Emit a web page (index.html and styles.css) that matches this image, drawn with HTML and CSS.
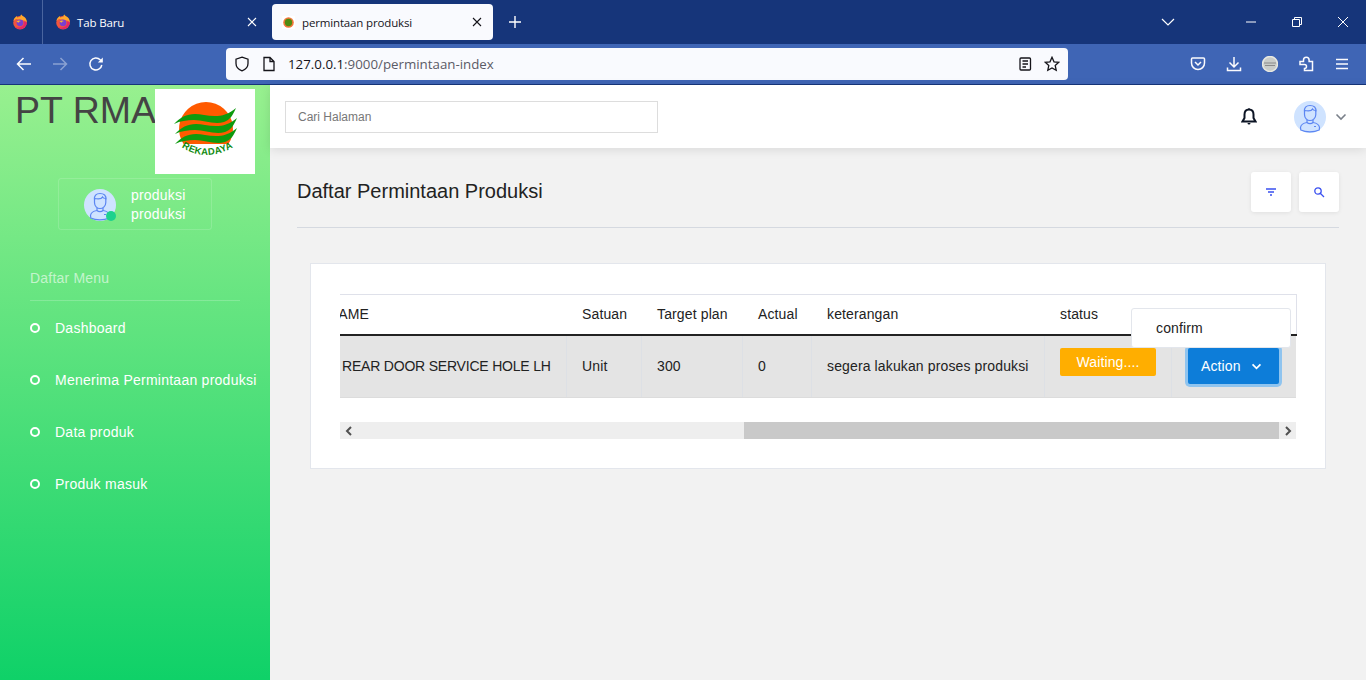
FILE: index.html
```html
<!DOCTYPE html>
<html lang="id">
<head>
    <meta charset="UTF-8">
    <title>permintaan produksi</title>
    <link rel="stylesheet" href="styles.css">
</head>
<body>
<svg class="defs" width="0" height="0">
    <symbol id="fox" viewBox="0 0 16 16">
        <circle cx="8" cy="8.800" r="6.800" fill="#f2553d"/>
        <path d="M1.400 7C2 4.200 3.600 2.600 5 2c-.2.800 0 1.400.4 1.800C6.200 3 7.400 2.600 8.800 2.700 8 1.800 8.400 1 9.600.4c.2 1 1.200 1.600 2.400 2.400 1.800 1.200 2.800 3.200 2.800 5.400 0 .8-.8-.6-1.800-1.400L4 5z" fill="#ffa72b"/>
        <path d="M14.800 8.200c0 3.800-3 6.800-6.800 6.800-2 0-3.600-.8-4.800-2 2.400 1 6 .8 7.800-1.200 1.200-1.400 1.400-3 1-4.600z" fill="#e3256b"/>
        <circle cx="8" cy="8.800" r="3.400" fill="#7a3fd0"/>
        <path d="M4.600 7.400c1.600-1.200 3.400-1 4.600 0-1.200-.2-2 .2-2.200 1-.6.200-1.600-.2-2.400-1z" fill="#ffb52e"/>
    </symbol>
    <symbol id="face" viewBox="0 0 32 32">
        <circle cx="16" cy="16" r="16" fill="#cfe3ff"/>
        <g fill="none" stroke="#5c86f2" stroke-width="1.200">
            <path d="M10.500 10.500c-.5-3.500 1.500-6 5.500-6s6.500 2 5.800 6"/>
            <path d="M10.500 9.500c2.500.5 7 .5 8-1.500.5 1 2 1.500 3.300 1.500v4c0 3.500-2.800 6-5.800 6s-5.500-2.500-5.500-6z"/>
            <path d="M13 19v2.500c-3 .5-6 1.500-6.500 5l.3 2.500c5 2.500 13 2.500 18.400 0l.3-2.500c-.5-3.500-3.500-4.500-6.500-5V19"/>
            <path d="M13 21.500c1.500 1.500 4.500 1.500 6 0M20 25.500h2"/>
        </g>
    </symbol>
</svg>

<div class="tabbar">
    <div class="view-btn"><svg class="ic16"><use href="#fox"/></svg></div>
    <div class="tab">
        <svg class="ic16"><use href="#fox"/></svg>
        <span class="tab-title">Tab Baru</span>
        <svg class="tab-x" viewBox="0 0 10 10"><path d="M1 1l8 8M9 1l-8 8"/></svg>
    </div>
    <div class="tab tab-active">
        <svg class="favicon" viewBox="0 0 16 16"><rect width="16" height="16" fill="#fff"/><circle cx="8" cy="8" r="6.500" fill="#f2763a"/><circle cx="8" cy="8" r="4.500" fill="#4f8a10"/></svg>
        <span class="tab-title">permintaan produksi</span>
        <svg class="tab-x" viewBox="0 0 10 10"><path d="M1 1l8 8M9 1l-8 8"/></svg>
    </div>
    <svg class="new-tab" viewBox="0 0 14 14"><path d="M7 1v12M1 7h12"/></svg>
    <div class="win-btns">
        <svg class="tab-list" viewBox="0 0 14 8"><path d="M1 1l6 6 6-6"/></svg>
        <svg class="win-ic" viewBox="0 0 12 12"><path d="M1 6h10"/></svg>
        <svg class="win-ic" viewBox="0 0 12 12"><path d="M1.500 3.500h7v7h-7zM3.500 3.500v-2h7v7h-2"/></svg>
        <svg class="win-ic" viewBox="0 0 12 12"><path d="M1 1l10 10M11 1L1 11"/></svg>
    </div>
</div>

<div class="navbar">
    <svg class="nav-ic" viewBox="0 0 16 16"><path d="M15 8H1.500M7.500 2l-6 6 6 6"/></svg>
    <svg class="nav-ic nav-off" viewBox="0 0 16 16"><path d="M1 8h13.500M8.500 2l6 6-6 6"/></svg>
    <svg class="nav-ic" viewBox="0 0 16 16"><path d="M13.800 9a6 6 0 1 1-1.600-5.200L14 5.500"/><path class="solid" d="M14.800 1.500v5h-5z"/></svg>
    <div class="urlbar">
        <svg class="url-ic" viewBox="0 0 16 16"><path d="M8 1.200l6 2v4.300c0 3.500-2.500 6-6 7.300-3.500-1.300-6-3.800-6-7.300V3.200z"/></svg>
        <svg class="url-ic" viewBox="0 0 16 16"><path d="M3 1.500h6l4 4v9H3zM9 1.500v4h4"/></svg>
        <span class="url-text"><b>127.0.0.1</b>:9000/permintaan-index</span>
        <svg class="url-ic" viewBox="0 0 16 16"><path d="M4 2h8.500c.6 0 1 .4 1 1v10c0 .6-.4 1-1 1H4c-.6 0-1-.4-1-1V3c0-.6.4-1 1-1zM5.500 5h5.500M5.500 8h5.500M5.500 11h3.500"/></svg>
        <svg class="url-ic url-star" viewBox="0 0 16 16"><path d="M8 1.300l2 4.500 4.800.5-3.600 3.200 1 4.800L8 12l-4.200 2.300 1-4.800L1.200 6.300 6 5.800z"/></svg>
    </div>
    <div class="nav-right">
        <svg class="nav-ic" viewBox="0 0 16 16"><path d="M2.500 2h11c.8 0 1 .5 1 1v4a6.500 6.500 0 0 1-13 0V3c0-.5.200-1 1-1zM5 6l3 3 3-3"/></svg>
        <svg class="nav-ic" viewBox="0 0 16 16"><path d="M8 1v9.500M3.500 6.500L8 11l4.500-4.500M1.500 11.500v3h13v-3"/></svg>
        <svg class="nav-ic" viewBox="0 0 16 16"><circle class="acct" cx="8" cy="8" r="7.500"/><path class="acct-line" d="M2 7h12M3 9.500h10"/></svg>
        <svg class="nav-ic" viewBox="0 0 16 16"><path d="M2 5.500h3.500V4a2.800 2.800 0 0 1 5.600 0v1.500h3.400v9h-8v-2a2 2 0 0 0 0-4H2z"/></svg>
        <svg class="nav-ic" viewBox="0 0 16 16"><path d="M2 3.500h12M2 8h12M2 12.500h12"/></svg>
    </div>
</div>

<div class="page">
    <aside class="sidebar">
        <div class="brand">
            <h1 class="brand-name">PT RMA</h1>
            <div class="brand-logo">
                <svg viewBox="0 0 100 85" width="100" height="85">
                    <defs>
                        <path id="arc" d="M22 55Q51 77 83 55"/>
                        <path id="wave" d="M19 35c8-9 17-12 30-9 11 2 22 2 32-7-3 7-6 12-12 14-10 3-20-2-30-2-7 0-14 1-20 4z"/>
                    </defs>
                    <path d="M28.600 55A27 27 0 1 1 73.400 55z" fill="#ff5a00"/>
                    <g fill="#0e9a0e">
                        <use href="#wave"/>
                        <use href="#wave" x="1" y="10"/>
                        <use href="#wave" x="1" y="20"/>
                    </g>
                    <text class="logo-text"><textPath href="#arc" startOffset="50%" text-anchor="middle">REKADAYA</textPath></text>
                </svg>
            </div>
        </div>
        <div class="user-box">
            <div class="user-avatar">
                <svg class="avatar"><use href="#face"/></svg>
                <span class="user-dot"></span>
            </div>
            <div class="user-name">produksi<br>produksi</div>
        </div>
        <div class="menu-title">Daftar Menu</div>
        <ul class="menu">
            <li>Dashboard</li>
            <li>Menerima Permintaan produksi</li>
            <li>Data produk</li>
            <li>Produk masuk</li>
        </ul>
    </aside>

    <div class="content">
        <header class="topbar">
            <input class="search" type="text" placeholder="Cari Halaman">
            <svg class="bell" viewBox="0 0 16 18"><path d="M8 1.500c-3 0-4.500 2.300-4.500 5v3.500L1.500 13.500h13L12.500 10V6.500c0-2.700-1.500-5-4.500-5z"/><path class="solid" d="M6.500 15h3a1.500 1.500 0 0 1-3 0zM7 .5h2v1.500H7z"/></svg>
            <svg class="avatar"><use href="#face"/></svg>
            <svg class="user-caret" viewBox="0 0 12 8"><path d="M1.500 1.500L6 6l4.500-4.500"/></svg>
        </header>

        <div class="page-head">
            <h2 class="page-title">Daftar Permintaan Produksi</h2>
            <div class="head-btns">
                <button class="icon-btn"><svg viewBox="0 0 12 12"><path d="M1 3h10M3 6h6M5 9h2"/></svg></button>
                <button class="icon-btn"><svg viewBox="0 0 12 12"><circle cx="5" cy="5" r="3.200"/><path d="M7.500 7.500l3.500 3.500"/></svg></button>
            </div>
        </div>

        <section class="card">
            <div class="table-wrap">
                <table class="data-table">
                    <colgroup>
                        <col class="c-name"><col class="c-unit"><col class="c-plan"><col class="c-act"><col class="c-note"><col class="c-status"><col class="c-action">
                    </colgroup>
                    <thead>
                        <tr>
                            <th class="name-head">NAME</th>
                            <th>Satuan</th>
                            <th>Target plan</th>
                            <th>Actual</th>
                            <th>keterangan</th>
                            <th>status</th>
                            <th></th>
                        </tr>
                    </thead>
                    <tbody>
                        <tr>
                            <td class="name-cell">REAR DOOR SERVICE HOLE LH</td>
                            <td>Unit</td>
                            <td>300</td>
                            <td>0</td>
                            <td>segera lakukan proses produksi</td>
                            <td class="status-cell"><span class="badge">Waiting....</span></td>
                            <td>
                                <button class="action-btn">Action
                                    <svg viewBox="0 0 12 8"><path d="M1.500 1.500L6 6l4.500-4.500"/></svg>
                                </button>
                            </td>
                        </tr>
                    </tbody>
                </table>
                <div class="dropdown">confirm</div>
            </div>
            <div class="scrollbar">
                <span class="sb-btn"><svg viewBox="0 0 8 10"><path d="M6 1L2 5l4 4"/></svg></span>
                <div class="sb-track"><div class="sb-thumb"></div></div>
                <span class="sb-btn"><svg viewBox="0 0 8 10"><path d="M2 1l4 4-4 4"/></svg></span>
            </div>
        </section>
    </div>
</div>
</body>
</html>
```

FILE: styles.css
```css
*, *::before {
    margin: 0;
    padding: 0;
    box-sizing: border-box;
}
html, body {
    height: 100%;
}
body {
    display: flex;
    flex-direction: column;
    font-family: "Liberation Sans", Arial, sans-serif;
    font-size: 14px;
    background-color: #f2f2f2;
    overflow: hidden;
}
.defs {
    position: absolute;
}
svg {
    display: block;
    flex: none;
    fill: none;
}

/* browser */
.tabbar {
    display: flex;
    align-items: center;
    height: 44px;
    background-color: #16357a;
    font-family: "Open Sans", sans-serif;
    font-size: 11.500px;
    letter-spacing: -.15px;
}
.view-btn {
    display: flex;
    align-items: center;
    width: 43px;
    height: 44px;
    padding-left: 12px;
    border-right: 1px solid #4a659f;
}
.ic16 {
    width: 16px;
    height: 16px;
}
.tab {
    display: flex;
    align-items: center;
    width: 229px;
    height: 36px;
    padding: 0 15px 0 12px;
    color: #fff;
}
.tab-title {
    flex: 1;
    margin-left: 6px;
}
.tab-x {
    width: 10px;
    height: 10px;
    stroke: currentColor;
    stroke-width: 1.100;
}
.tab-active {
    width: 221px;
    padding: 0 11px;
    border-radius: 4px;
    background-color: #f9fafe;
    color: #15141a;
}
.favicon {
    width: 13px;
    height: 13px;
    margin-left: -1px;
}
.tab-active .tab-title {
    margin-left: 7px;
}
.new-tab {
    width: 14px;
    height: 14px;
    margin-left: 15px;
    stroke: #fff;
    stroke-width: 1.400;
}
.win-btns {
    display: flex;
    align-items: center;
    gap: 34px;
    margin-left: auto;
    padding-right: 17px;
}
.tab-list {
    width: 14px;
    height: 8px;
    margin-right: 36px;
    stroke: #fff;
    stroke-width: 1.200;
}
.win-ic {
    width: 12px;
    height: 12px;
    stroke: #fff;
    stroke-width: 1;
}
.navbar {
    display: flex;
    align-items: center;
    height: 41px;
    padding: 0 16px;
    background-color: #3f65b5;
    border-bottom: 1px solid #16357a;
}
.nav-ic {
    width: 16px;
    height: 16px;
    margin-right: 20px;
    stroke: #fbfbfe;
    stroke-width: 1.500;
}
.nav-off {
    opacity: .4;
}
.nav-ic .solid {
    fill: #fbfbfe;
    stroke: none;
}
.urlbar {
    display: flex;
    align-items: center;
    width: 842px;
    height: 32px;
    margin-left: 102px;
    padding: 0 8px;
    border-radius: 4px;
    background-color: #f9fafe;
    color: #5b5b66;
    font-family: "Open Sans", sans-serif;
    font-size: 13.300px;
}
.url-ic {
    width: 16px;
    height: 16px;
    stroke: #15141a;
    stroke-width: 1.300;
    margin-right: 11px;
}
.url-text {
    flex: 1;
}
.url-text b {
    font-weight: 400;
    color: #15141a;
}
.url-star {
    margin-right: 0;
}
.nav-right {
    display: flex;
    margin-left: auto;
    margin-right: -20px;
}
.acct {
    fill: #c9ccc9;
    stroke: #e8e8e0;
}
.acct-line {
    stroke: #8a8a8a;
    stroke-width: 1;
}

/* page */
.page {
    flex: 1;
    display: flex;
    min-height: 0;
}
.sidebar {
    flex: none;
    width: 270px;
    padding-top: 4px;
    background: linear-gradient(to bottom, #98f08f 0%, #0fd168 100%);
    color: #fff;
}
.brand {
    display: flex;
    padding-left: 15px;
}
.brand-name {
    width: 140px;
    height: 40px;
    font-size: 37.500px;
    font-weight: 400;
    line-height: 42px;
    color: #444;
    white-space: nowrap;
}
.brand-logo {
    width: 100px;
    height: 85px;
    background-color: #fff;
}
.logo-text {
    font-family: "Liberation Sans", sans-serif;
    font-size: 9.500px;
    font-weight: 700;
    letter-spacing: .3px;
    fill: #0e8a0e;
}
.user-box {
    display: flex;
    align-items: center;
    width: 154px;
    height: 52px;
    margin: 4px 0 0 58px;
    padding: 2px 0 0 25px;
    border: 1px solid rgba(255,255,255,.15);
    border-radius: 3px;
}
.user-avatar {
    position: relative;
}
.avatar {
    width: 32px;
    height: 32px;
}
.user-dot {
    position: absolute;
    right: 0;
    bottom: 0;
    width: 10px;
    height: 10px;
    border-radius: 50%;
    background-color: #1dd18d;
}
.user-name {
    margin-left: 15px;
    line-height: 19px;
    letter-spacing: .2px;
}
.menu-title {
    margin: 40px 30px 0;
    padding-bottom: 13px;
    border-bottom: 1px solid rgba(255,255,255,.2);
    line-height: 17px;
    letter-spacing: .2px;
    color: rgba(255,255,255,.6);
}
.menu {
    list-style: none;
    padding: 1px 0 0 30px;
    white-space: nowrap;
    letter-spacing: .25px;
}
.menu li {
    display: flex;
    align-items: center;
    height: 52px;
}
.menu li::before {
    content: "";
    flex: none;
    width: 10px;
    height: 10px;
    margin: -1px 15px 0 0;
    border: 2.500px solid #fff;
    border-radius: 50%;
}
.content {
    flex: 1;
    min-width: 0;
}
.topbar {
    display: flex;
    align-items: center;
    height: 63px;
    padding: 0 19px 0 15px;
    background-color: #fff;
    box-shadow: 0 2px 10px rgba(0,0,0,.1);
}
.search {
    width: 373px;
    height: 32px;
    padding: 0 12px;
    border: 1px solid #ddd;
    font-family: "Liberation Sans", sans-serif;
    font-size: 12px;
    outline: none;
}
.search::placeholder {
    color: #777;
}
.bell {
    width: 16px;
    height: 18px;
    margin: 0 37px 0 auto;
    stroke: #0c1424;
    stroke-width: 2;
}
.bell .solid {
    fill: #0c1424;
    stroke: none;
}
.user-caret {
    width: 12px;
    height: 8px;
    margin-left: 9px;
    stroke: #7a808a;
    stroke-width: 1.600;
}
.page-head {
    display: flex;
    align-items: flex-start;
    justify-content: space-between;
    margin: 24px 27px 0;
    height: 56px;
    border-bottom: 1px solid #d5d9e0;
}
.page-title {
    font-size: 20px;
    font-weight: 400;
    line-height: 38px;
    color: #222;
}
.head-btns {
    display: flex;
    gap: 8px;
}
.icon-btn {
    display: flex;
    align-items: center;
    justify-content: center;
    width: 40px;
    height: 40px;
    border: 0;
    border-radius: 3px;
    background-color: #fff;
    box-shadow: 0 1px 4px rgba(0,0,0,.08);
}
.icon-btn svg {
    width: 12px;
    height: 12px;
    stroke: #3a50f0;
    stroke-width: 1.300;
}
.card {
    margin: 35px 40px 0;
    padding: 30px 29px 29px;
    border: 1px solid #e3e6ec;
    background-color: #fff;
}
.table-wrap {
    position: relative;
}
.data-table {
    width: 956px;
    table-layout: fixed;
    border-collapse: collapse;
    color: #222;
    letter-spacing: .13px;
}
.c-name { width: 226px; }
.c-unit { width: 75px; }
.c-plan { width: 101px; }
.c-act { width: 69px; }
.c-note { width: 233px; }
.c-status { width: 127px; }
.c-action { width: 125px; }
.data-table th {
    height: 40px;
    padding: 0 0 0 16px;
    border-top: 1px solid #dfe1ea;
    border-bottom: 2px solid #222;
    font-weight: 400;
    text-align: left;
}
.data-table th:last-child {
    border-right: 1px solid #dfe1ea;
}
.data-table th.name-head {
    padding-left: 0;
    text-indent: -12px;
    overflow: hidden;
}
.data-table td {
    height: 63px;
    padding: 0 0 0 15.500px;
    border-left: 1px solid #dde0e5;
    border-bottom: 1px solid #dcdcdc;
    background-color: #e4e4e4;
}
.data-table td.name-cell {
    padding-left: 2px;
    border-left: 0;
    white-space: nowrap;
    letter-spacing: -.2px;
}
.data-table td.status-cell {
    padding-top: 12px;
    vertical-align: top;
}
.badge {
    display: block;
    width: 96px;
    height: 28px;
    border-radius: 2px;
    background-color: #ffae00;
    color: #fff;
    line-height: 28px;
    text-align: center;
}
.action-btn {
    display: flex;
    align-items: center;
    width: 91px;
    height: 36px;
    margin-left: 1px;
    padding-left: 13px;
    border: 0;
    border-radius: 2px;
    background-color: #0d7dd9;
    box-shadow: 0 0 0 3px #8fc4ef;
    color: #fff;
    font-family: "Liberation Sans", sans-serif;
    font-size: 14px;
    letter-spacing: .13px;
}
.action-btn svg {
    width: 11px;
    height: 7px;
    margin-left: 10px;
    stroke: #fff;
    stroke-width: 2;
}
.dropdown {
    position: absolute;
    top: 14px;
    right: 5px;
    width: 160px;
    height: 40px;
    padding-left: 24px;
    border: 1px solid #e3e6ec;
    border-radius: 3px;
    background-color: #fff;
    color: #222;
    line-height: 38px;
    letter-spacing: .13px;
}
.scrollbar {
    display: flex;
    height: 17px;
    margin-top: 24px;
    background-color: #eee;
}
.sb-btn {
    display: flex;
    align-items: center;
    justify-content: center;
    width: 17px;
}
.sb-btn svg {
    width: 8px;
    height: 10px;
    stroke: #505050;
    stroke-width: 2;
}
.sb-track {
    flex: 1;
}
.sb-thumb {
    width: 535px;
    height: 100%;
    margin-left: 387px;
    background-color: #c9c9c9;
}
```
